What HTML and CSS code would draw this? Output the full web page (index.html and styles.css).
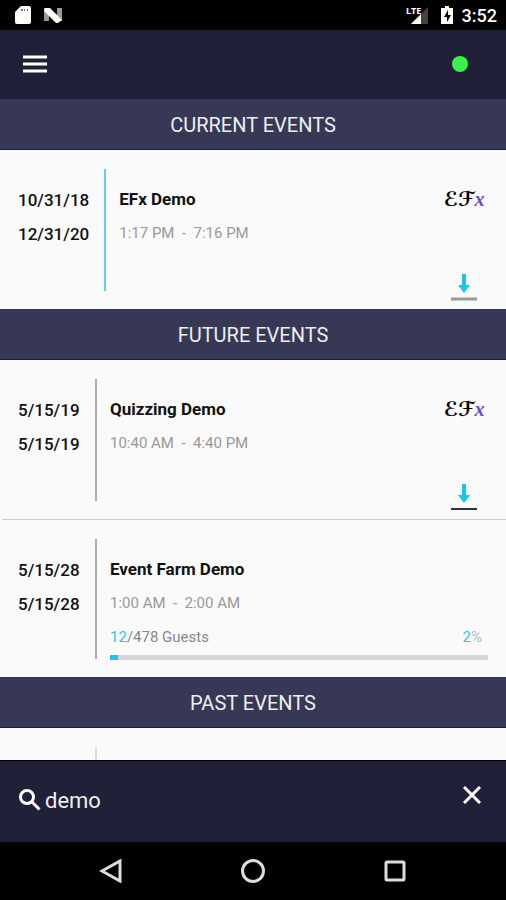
FILE: index.html
```
<!DOCTYPE html>
<html lang="en">
<head>
    <meta charset="UTF-8">
    <meta name="viewport" content="width=device-width, initial-scale=1.0">
    <title>Events</title>
    <link rel="stylesheet" href="styles.css">
</head>
<body>
    <div class="status-bar">
        <svg width="16" height="20" viewBox="0 0 16 20">
            <path d="M6 1h8a2 2 0 0 1 2 2v14a2 2 0 0 1-2 2H2a2 2 0 0 1-2-2V7z" fill="#fff"/>
            <path d="M6 4h2v2H6zM9 4h1v2H9zM12 4h1v2h-1z" fill="#777"/>
        </svg>
        <svg width="20" height="16" viewBox="0 0 20 16">
            <path d="M1 1h5v13H1zM14 1h5v13h-5z" fill="#999"/>
            <path d="M2 1h5l12 12-4 3h-2L1 4z" fill="#fff"/>
        </svg>
        <span class="spacer"></span>
        <svg class="signal" width="23" height="20" viewBox="0 0 23 20">
            <path d="M22 2v17H5z" fill="#444"/>
            <path d="M15 9v10H5z" fill="#fff"/>
            <text x="0" y="9">LTE</text>
        </svg>
        <svg width="12" height="20" viewBox="0 0 12 20">
            <path d="M4 1h4v2h4v16H0V3h4z" fill="#fff"/>
            <path d="M7 5l-4 7h3v5l4-7H7z" fill="#000"/>
        </svg>
        <span class="clock">3:52</span>
    </div>

    <header class="app-header">
        <button type="button" class="menu-button" aria-label="Menu">
            <svg width="24" height="18" viewBox="0 0 24 18">
                <path d="M0 2h24M0 9h24M0 16h24" stroke="#fff" stroke-width="3"/>
            </svg>
        </button>
        <span class="online-dot"></span>
    </header>

    <main class="events">
        <h2>CURRENT EVENTS</h2>
        <article class="event current">
            <div class="dates">
                <span>10/31/18</span>
                <span>12/31/20</span>
            </div>
            <div class="details">
                <h3>EFx Demo</h3>
                <p class="time">1:17 PM &nbsp;- &nbsp;7:16 PM</p>
            </div>
            <div class="actions">
                <span class="logo">&#8496;&#8497;<i>x</i></span>
                <button type="button" class="download" aria-label="Download EFx Demo">
                    <svg width="26" height="28" viewBox="0 0 26 28">
                        <path d="M11 1h4v11h4l-6 8-6-8h4z" fill="#18c5ec"/>
                        <path d="M0 26h26" stroke="#999" stroke-width="3"/>
                    </svg>
                </button>
            </div>
        </article>

        <h2>FUTURE EVENTS</h2>
        <article class="event">
            <div class="dates">
                <span>5/15/19</span>
                <span>5/15/19</span>
            </div>
            <div class="details">
                <h3>Quizzing Demo</h3>
                <p class="time">10:40 AM &nbsp;- &nbsp;4:40 PM</p>
            </div>
            <div class="actions">
                <span class="logo">&#8496;&#8497;<i>x</i></span>
                <button type="button" class="download" aria-label="Download Quizzing Demo">
                    <svg width="26" height="28" viewBox="0 0 26 28">
                        <path d="M11 1h4v11h4l-6 8-6-8h4z" fill="#18c5ec"/>
                        <path d="M0 26h26" stroke="#333" stroke-width="2"/>
                    </svg>
                </button>
            </div>
        </article>
        <hr>
        <article class="event">
            <div class="dates">
                <span>5/15/28</span>
                <span>5/15/28</span>
            </div>
            <div class="details">
                <h3>Event Farm Demo</h3>
                <p class="time">1:00 AM &nbsp;- &nbsp;2:00 AM</p>
                <div class="guests">
                    <span><b>12</b>/478 Guests</span>
                    <span class="percent"><b>2</b>%</span>
                </div>
                <div class="progress"><div class="progress-fill" style="width: 2%"></div></div>
            </div>
        </article>

        <h2>PAST EVENTS</h2>
        <article class="event past">
            <div class="dates"></div>
        </article>
    </main>

    <form class="search">
        <label for="search-input" aria-label="Search">
            <svg width="22" height="24" viewBox="0 0 22 24" fill="none" stroke="#fff" stroke-width="3">
                <circle cx="8" cy="8" r="6.5"/>
                <path d="M12.5 12.5l8 8"/>
            </svg>
        </label>
        <input type="text" id="search-input" value="demo">
        <button type="reset" aria-label="Clear search">
            <svg width="18" height="18" viewBox="0 0 18 18">
                <path d="M1 1l16 16M17 1L1 17" stroke="#fff" stroke-width="3"/>
            </svg>
        </button>
    </form>

    <nav class="nav-bar">
        <button type="button" aria-label="Back">
            <svg width="24" height="24" viewBox="0 0 24 24">
                <path d="M21 2v20L3 12z"/>
            </svg>
        </button>
        <button type="button" aria-label="Home">
            <svg width="24" height="24" viewBox="0 0 24 24">
                <circle cx="12" cy="12" r="10.5"/>
            </svg>
        </button>
        <button type="button" aria-label="Recent apps">
            <svg width="24" height="24" viewBox="0 0 24 24">
                <rect x="3" y="3" width="18" height="18" rx="1"/>
            </svg>
        </button>
    </nav>
</body>
</html>
```
FILE: styles.css
```
* {
    box-sizing: border-box;
}
body {
    display: flex;
    flex-direction: column;
    height: 100vh;
    margin: 0;
    font-family: Roboto, sans-serif;
    background: #fafafa;
    color: #111;
}
button {
    display: flex;
    padding: 0;
    border: none;
    background: none;
    cursor: pointer;
}
.status-bar {
    display: flex;
    flex-shrink: 0;
    align-items: center;
    gap: 12px;
    height: 30px;
    padding: 0 9px 0 15px;
    background: #000;
    color: #fff;
}
.spacer {
    flex: 1;
}
.signal {
    overflow: visible;
}
.signal text {
    font-family: "Open Sans", sans-serif;
    font-size: 9px;
    font-weight: bold;
    font-stretch: normal;
    fill: #fff;
}
.clock {
    margin-left: -3px;
    font-size: 18px;
    font-weight: 500;
}
.app-header {
    display: flex;
    flex-shrink: 0;
    align-items: center;
    justify-content: space-between;
    height: 69px;
    padding: 0 38px 2px 23px;
    background: #212039;
}
.online-dot {
    width: 16px;
    height: 16px;
    border-radius: 50%;
    background: #3cf04c;
}
.events {
    flex: 1;
    min-height: 0;
    overflow-y: auto;
    scrollbar-width: none;
}
h2 {
    margin: 0;
    padding-top: 2px;
    border-bottom: 1px solid #1d1b47;
    background: #373856;
    color: #eee;
    font-size: 20px;
    font-weight: 400;
    line-height: 48px;
    text-align: center;
}
hr {
    height: 1px;
    margin: 0 0 0 2px;
    border: none;
    background: #ccc;
}
.event {
    display: flex;
    min-height: 157px;
    padding: 19px 18px 8px;
    line-height: 34px;
}
.dates {
    display: flex;
    flex-direction: column;
    min-width: 79px;
    margin-bottom: 10px;
    padding: 14px 15px 0 0;
    border-right: 2px solid #aaa;
    font-size: 17px;
    font-weight: 500;
}
.current .dates {
    border-color: #5fd3ee;
}
.past .dates {
    border-color: #ddd;
}
.details {
    flex: 1;
    padding: 13px 0 0 13px;
}
h3 {
    margin: 0;
    font-size: 17px;
    font-weight: 700;
}
.time {
    margin: 0;
    color: #999;
    font-size: 15px;
}
.guests {
    display: flex;
    justify-content: space-between;
    padding-right: 6px;
    color: #888;
    font-size: 15px;
}
.guests b {
    color: #2bc8ec;
    font-weight: 400;
}
.percent {
    color: #bbb;
}
.progress {
    height: 5px;
    margin-top: 1px;
    background: #d6d6d6;
}
.progress-fill {
    height: 100%;
    background: #18c5ec;
}
.actions {
    display: flex;
    flex-direction: column;
    align-items: center;
    justify-content: space-between;
    width: 48px;
    min-height: 132px;
    padding-top: 13px;
}
.logo {
    color: #000;
    font-family: "DejaVu Sans", "DejaVu Serif", serif;
    font-size: 20px;
    font-style: italic;
    font-weight: bold;
    white-space: nowrap;
}
.logo i {
    color: #5b50dc;
    font-family: "Liberation Serif", serif;
}
.search {
    display: flex;
    flex-shrink: 0;
    align-items: center;
    gap: 4px;
    height: 82px;
    padding: 0 25px 2px 19px;
    border-top: 1px solid #000;
    background: #212039;
}
.search label {
    display: flex;
}
.search input {
    flex: 1;
    min-width: 0;
    padding: 0;
    border: none;
    outline: none;
    background: none;
    color: #eee;
    font: 22px Roboto, sans-serif;
}
.search button {
    padding-bottom: 12px;
}
.nav-bar {
    display: flex;
    flex-shrink: 0;
    align-items: center;
    justify-content: space-around;
    height: 58px;
    padding: 0 40px;
    background: #000;
}
.nav-bar svg {
    fill: none;
    stroke: #ddd;
    stroke-width: 3;
}
```
